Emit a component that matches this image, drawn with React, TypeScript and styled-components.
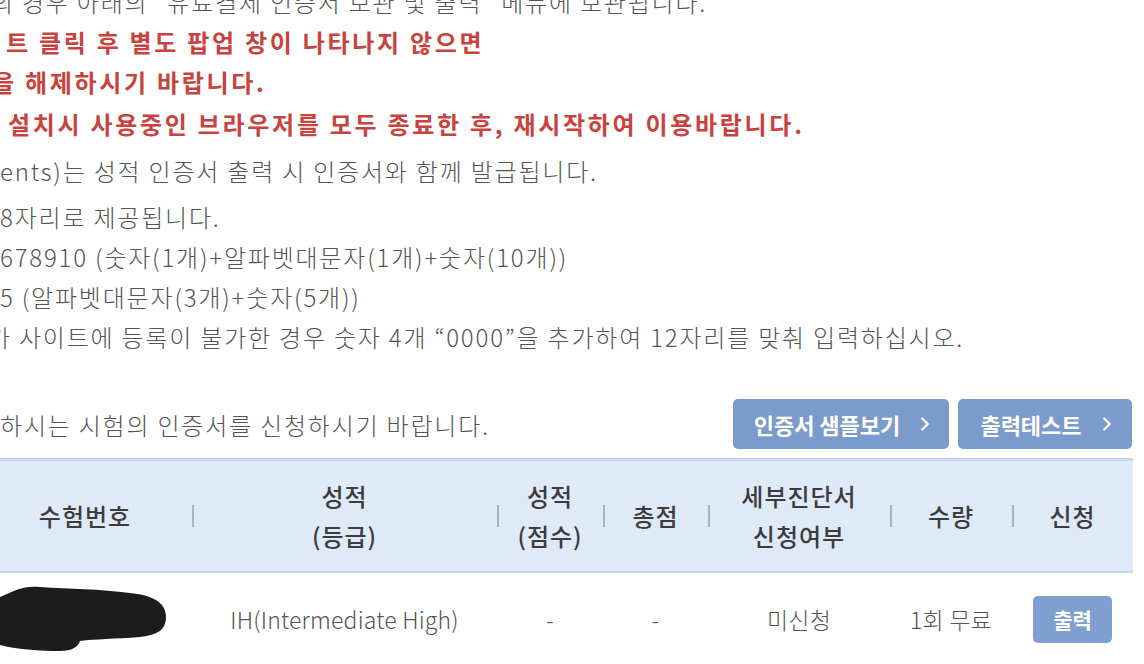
import React from 'react';
import styled, { createGlobalStyle } from 'styled-components';
import { ChevronRight } from 'lucide-react';

const GlobalStyle = createGlobalStyle`
  html, body {
    margin: 0;
    padding: 0;
    background: #fff;
    overflow: hidden;
  }
  body {
    width: 1144px;
    height: 664px;
    font-family: "Noto Sans CJK KR", "Noto Sans", sans-serif;
  }
`;

const Page = styled.div`
  width: 1144px;
  height: 664px;
  overflow: hidden;
`;

const Notice = styled.div`
  margin-top: -18px;
`;

const Line = styled.p<{ $tone?: 'gray' | 'red'; $indent?: number; $gap?: number }>`
  margin: ${p => p.$gap || 0}px 0 0;
  height: 40px;
  line-height: 40px;
  white-space: nowrap;
  font-size: 24px;
  font-weight: ${p => (p.$tone === 'red' ? 700 : 300)};
  letter-spacing: ${p => (p.$tone === 'red' ? 2.7 : 1.8)}px;
  color: ${p => (p.$tone === 'red' ? '#c9423e' : '#555')};
  text-indent: ${p => p.$indent || 0}px;
`;

const ActionRow = styled.div`
  display: flex;
  align-items: center;
  justify-content: space-between;
  margin-top: 41px;
  padding-right: 12px;
  height: 52px;
`;

const ActionText = styled.span`
  font-size: 24px;
  font-weight: 300;
  letter-spacing: 1.8px;
  color: #555;
  white-space: nowrap;
`;

const ButtonGroup = styled.div`
  display: flex;
  gap: 9px;
`;

const BlueButton = styled.button<{ $width: number }>`
  width: ${p => p.$width}px;
  height: 50px;
  border: none;
  border-radius: 5px;
  background: #7b9bcc;
  color: #fff;
  font-family: "Noto Sans CJK KR", sans-serif;
  font-size: 22px;
  font-weight: 700;
  display: flex;
  align-items: center;
  justify-content: center;
  gap: 14px;
  padding: 0 0 0 8px;
  svg {
    stroke-width: 2.6;
  }
`;

const Table = styled.div`
  margin-top: 8px;
  width: 1133px;
`;

const HeadRow = styled.div`
  display: grid;
  grid-template-columns: 192px 305px 106px 105px 182px 122px 121px;
  height: 110px;
  background: #dfeaf8;
  border-top: 3px solid #c6d6ec;
  border-bottom: 2px solid #c6d6ec;
`;

const HeadCell = styled.div<{ $first?: boolean }>`
  position: relative;
  display: flex;
  align-items: center;
  justify-content: center;
  text-align: center;
  padding-right: ${p => (p.$first ? 22 : 0)}px;
  font-size: 24px;
  font-weight: 500;
  letter-spacing: 1px;
  line-height: 40px;
  color: #3c3c3c;
  &::before {
    content: '';
    display: ${p => (p.$first ? 'none' : 'block')};
    position: absolute;
    left: 0;
    top: 50%;
    width: 2px;
    height: 22px;
    margin-top: -11px;
    background: #a9b3c0;
  }
`;

const BodyRow = styled.div`
  display: grid;
  grid-template-columns: 192px 305px 106px 105px 182px 122px 121px;
  height: 92px;
`;

const BodyCell = styled.div<{ $first?: boolean }>`
  display: flex;
  align-items: center;
  justify-content: ${p => (p.$first ? 'flex-start' : 'center')};
  font-size: 23px;
  font-weight: 300;
  letter-spacing: 0.2px;
  color: #555;
  white-space: nowrap;
`;

const SmallButton = styled.button`
  width: 79px;
  height: 47px;
  border: none;
  border-radius: 5px;
  background: #7f9fd0;
  color: #fff;
  font-family: "Noto Sans CJK KR", sans-serif;
  font-size: 21px;
  font-weight: 700;
`;

function Redaction() {
  return (
    <svg width="170" height="72" viewBox="0 0 170 72">
      <path
        d="M0 14 C10 10 22 2 40 4 C70 6 100 6 130 10 C150 12 166 18 166 34 C166 48 156 52 140 54 C115 56 95 56 80 58 C78 64 72 68 60 68 C40 68 15 66 0 62 Z"
        fill="#1c1c1c"
      />
    </svg>
  );
}

export default function App() {
  return (
    <Page>
      <GlobalStyle />
      <Notice>
        <Line $tone="gray" $indent={-9}>의 경우 아래의 “유료결제 인증서 보관 및 출력” 메뉴에 보관됩니다.</Line>
        <Line $tone="red" $indent={6}>트 클릭 후 별도 팝업 창이 나타나지 않으면</Line>
        <Line $tone="red" $indent={-8}>을 해제하시기 바랍니다.</Line>
        <Line $tone="red" $indent={8} $gap={2}>설치시 사용중인 브라우저를 모두 종료한 후, 재시작하여 이용바랍니다.</Line>
        <Line $tone="gray" $gap={7}>ents)는 성적 인증서 출력 시 인증서와 함께 발급됩니다.</Line>
        <Line $tone="gray" $gap={6}>8자리로 제공됩니다.</Line>
        <Line $tone="gray">678910 (숫자(1개)+알파벳대문자(1개)+숫자(10개))</Line>
        <Line $tone="gray">5 (알파벳대문자(3개)+숫자(5개))</Line>
        <Line $tone="gray" $indent={-12}>가 사이트에 등록이 불가한 경우 숫자 4개 “0000”을 추가하여 12자리를 맞춰 입력하십시오.</Line>
      </Notice>

      <ActionRow>
        <ActionText>하시는 시험의 인증서를 신청하시기 바랍니다.</ActionText>
        <ButtonGroup>
          <BlueButton $width={216}>
            인증서 샘플보기 <ChevronRight size={22} />
          </BlueButton>
          <BlueButton $width={174}>
            출력테스트 <ChevronRight size={22} />
          </BlueButton>
        </ButtonGroup>
      </ActionRow>

      <Table>
        <HeadRow>
          <HeadCell $first>수험번호</HeadCell>
          <HeadCell>성적<br />(등급)</HeadCell>
          <HeadCell>성적<br />(점수)</HeadCell>
          <HeadCell>총점</HeadCell>
          <HeadCell>세부진단서<br />신청여부</HeadCell>
          <HeadCell>수량</HeadCell>
          <HeadCell>신청</HeadCell>
        </HeadRow>
        <BodyRow>
          <BodyCell $first><Redaction /></BodyCell>
          <BodyCell>IH(Intermediate High)</BodyCell>
          <BodyCell>-</BodyCell>
          <BodyCell>-</BodyCell>
          <BodyCell>미신청</BodyCell>
          <BodyCell>1회 무료</BodyCell>
          <BodyCell><SmallButton>출력</SmallButton></BodyCell>
        </BodyRow>
      </Table>
    </Page>
  );
}
